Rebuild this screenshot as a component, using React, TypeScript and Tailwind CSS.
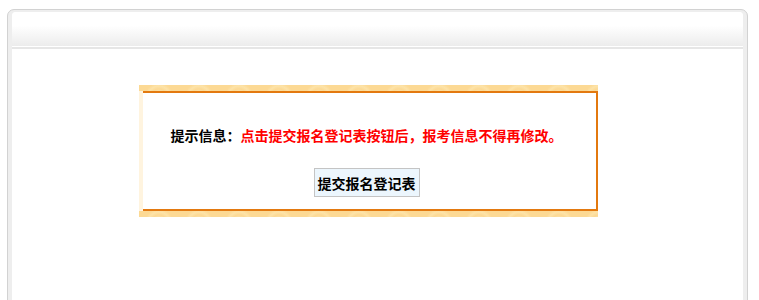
import React from "react";

const band =
  "h-[6px] bg-[#fcd994] bg-[radial-gradient(circle_at_50%_100%,#fff3d6_0px,#fde6ae_4px,#fcd994_8px,#fde3a8_11px,#fcd994_14px)] bg-[length:40px_12px]";

export default function App() {
  return (
    <div
      className="w-[759px] h-[300px] overflow-hidden bg-white pt-[9px] pl-[7px] pr-[11px]"
      style={{ fontFamily: '"Liberation Serif", "Noto Sans CJK SC", serif' }}
    >
      <div className="h-[320px] rounded-t-[7px] border border-[#d2d2d2] bg-[#eeeeee] px-[4px] pt-[2px]">
        <div className="h-full rounded-t-[4px] bg-white">
          <div className="h-[34px] rounded-t-[4px] bg-gradient-to-b from-white from-40% to-[#ececec]" />
          <div className="h-[1px] bg-white" />
          <div className="h-[2px] bg-[#e6e6e6]" />
          <div className="pt-[36px] pl-[127px]">
            <div className="w-[459px]">
              <div className={band} />
              <div className="flex">
                <div className="w-[4px] bg-[#fff4df]" />
                <div className="flex-1 h-[120px] border-y-2 border-r-2 border-[#e3790f] bg-white flex flex-col items-center pt-[32px] pr-[6px]">
                  <p
                    className="text-[14px] leading-[20px] font-bold text-black"
                    style={{ fontFamily: '"Noto Sans CJK SC", sans-serif' }}
                  >
                    提示信息：<span className="text-[#ff0000]">点击提交报名登记表按钮后，报考信息不得再修改。</span>
                  </p>
                  <button
                    className="mt-[23px] h-[29px] w-[106px] border border-[#c4c4c4] bg-[#ecf6fd] text-[14px] font-bold text-black leading-none"
                    style={{ fontFamily: '"Noto Sans CJK SC", sans-serif' }}
                  >
                    提交报名登记表
                  </button>
                </div>
              </div>
              <div className={band} />
            </div>
          </div>
        </div>
      </div>
    </div>
  );
}
